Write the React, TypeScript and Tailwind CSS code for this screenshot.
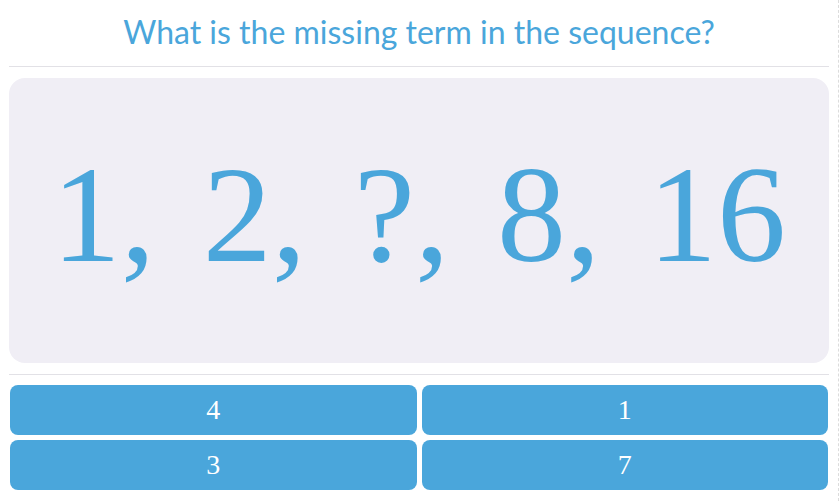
export default function App() {
  const answers = ["4", "1", "3", "7"]

  return (
    <div className="w-[840px] h-[501px] bg-white flex">
      <div className="w-[838px] flex flex-col px-[9px]">
        {/* Question */}
        <div className="h-[67px] flex items-center justify-center border-b border-[#e2e1e6]">
          <h1 className="text-[32px] text-[#4aa6db] font-['Lato',sans-serif] leading-none pb-[2px]">
            What is the missing term in the sequence?
          </h1>
        </div>

        {/* Sequence card */}
        <div className="mt-[11px] h-[285px] rounded-[16px] bg-[#f0eef5] flex items-center justify-center">
          <span className="text-[138px] leading-none text-[#4aa6db] font-['Liberation_Serif',serif] [word-spacing:13px] pb-[12px]">
            1, 2, ?, 8, 16
          </span>
        </div>

        {/* Answers */}
        <div className="mt-[11px] border-t border-[#e2e1e6] pt-[10px] grid grid-cols-2 gap-[5px] px-[1px]">
          {answers.map((a) => (
            <button
              key={a}
              className="h-[50px] rounded-[8px] bg-[#4aa6db] text-white text-[28px] font-['Liberation_Serif',serif] flex items-center justify-center"
            >
              {a}
            </button>
          ))}
        </div>
      </div>
      <div className="w-[2px] h-full border-l border-dashed border-[#dcdcdc]" />
    </div>
  )
}
